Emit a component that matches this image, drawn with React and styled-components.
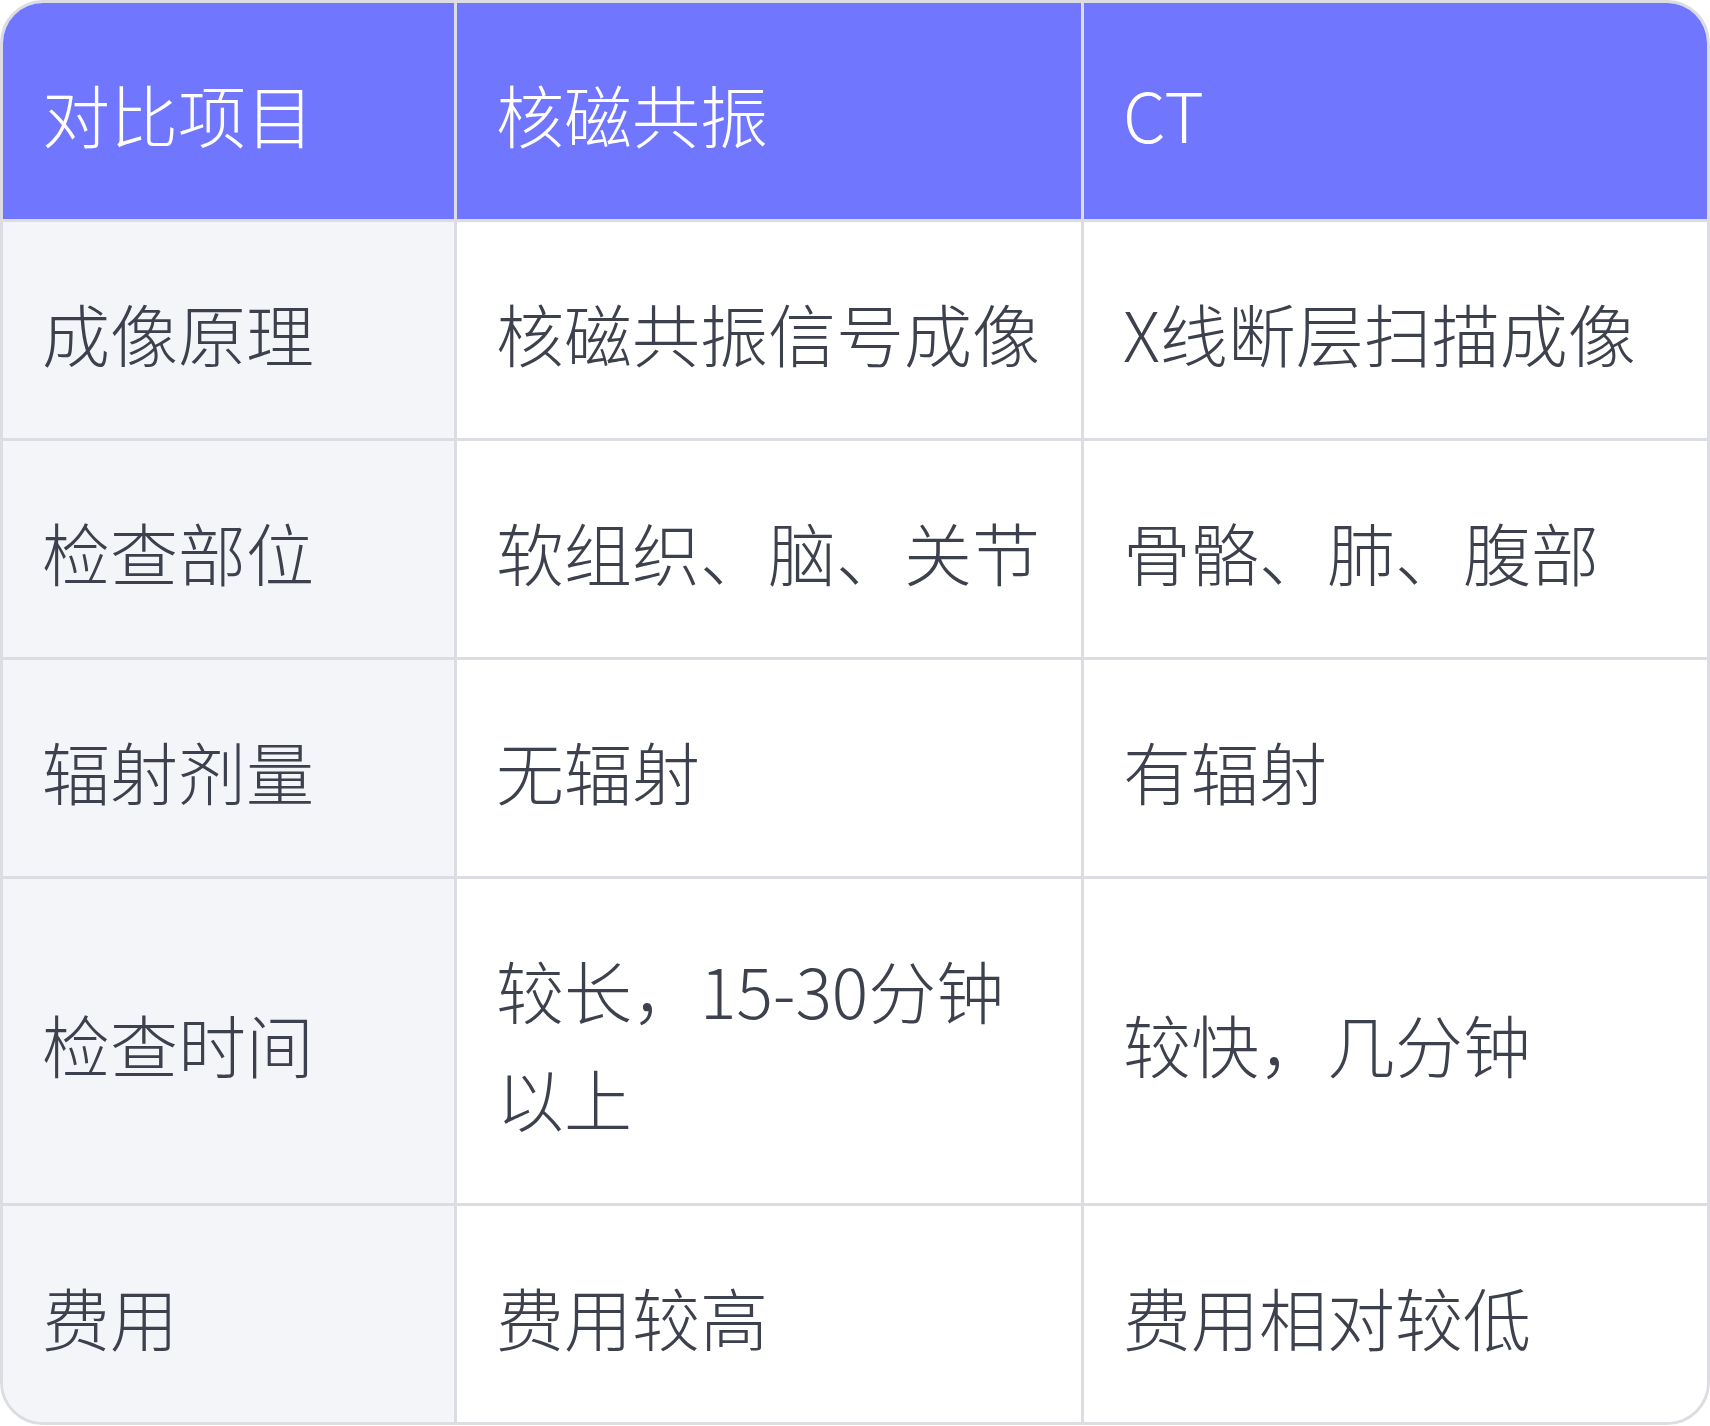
import React from "react";
import styled, { createGlobalStyle } from "styled-components";

const GlobalStyle = createGlobalStyle`
    * {
        box-sizing: border-box;
    }
    body {
        margin: 0;
        background: #ffffff;
        font-family: "Noto Sans CJK SC", "Noto Sans", sans-serif;
    }
`;

const TableBlock = styled.div`
    width: 1710px;
    border: 3px solid #dcdde2;
    border-radius: 43px;
    overflow: hidden;
    display: grid;
    grid-template-columns: 454px 627px 1fr;
`;

const Cell = styled.div`
    display: flex;
    align-items: center;
    padding: 57px 38px 51px 39px;
    font-size: 68px;
    line-height: 108px;
    font-weight: 300;
    color: ${(p) => (p.$head ? "#ffffff" : "#3d414d")};
    background: ${(p) => (p.$head ? "#7176ff" : p.$label ? "#f4f5f9" : "#ffffff")};
    border-right: ${(p) => (p.$last ? "none" : "3px solid #dcdde2")};
    border-bottom: ${(p) => (p.$bottom ? "none" : "3px solid #dcdde2")};
`;

const headers = ["对比项目", "核磁共振", "CT"];

const rows = [
    ["成像原理", "核磁共振信号成像", "X线断层扫描成像"],
    ["检查部位", "软组织、脑、关节", "骨骼、肺、腹部"],
    ["辐射剂量", "无辐射", "有辐射"],
    ["检查时间", "较长，15-30分钟以上", "较快，几分钟"],
    ["费用", "费用较高", "费用相对较低"],
];

const App = () => {
    return (
        <>
            <GlobalStyle />
            <TableBlock>
                {headers.map((h, i) => (
                    <Cell key={h} $head $last={i === 2}>
                        {h}
                    </Cell>
                ))}
                {rows.map((row, r) =>
                    row.map((text, c) => (
                        <Cell
                            key={`${r}-${c}`}
                            $label={c === 0}
                            $last={c === 2}
                            $bottom={r === rows.length - 1}
                        >
                            {text}
                        </Cell>
                    ))
                )}
            </TableBlock>
        </>
    );
};

export default App;
